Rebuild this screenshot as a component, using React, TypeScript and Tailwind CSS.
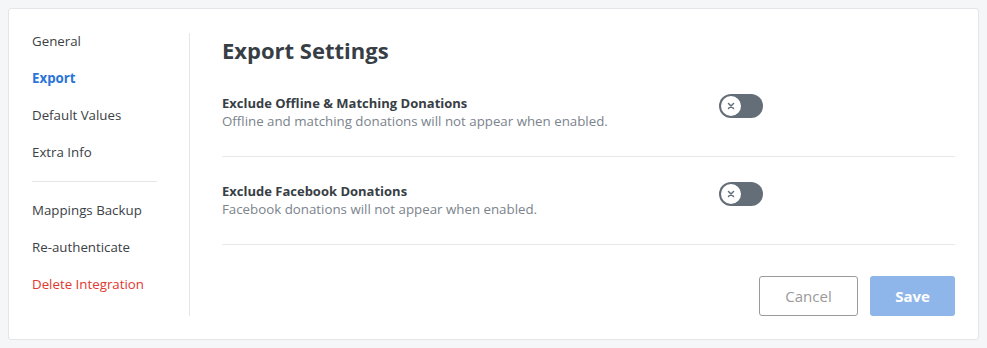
import React from "react";

const NAV_TOP = ["General", "Export", "Default Values", "Extra Info"];
const NAV_BOTTOM = ["Mappings Backup", "Re-authenticate"];

const SETTINGS = [
  {
    title: "Exclude Offline & Matching Donations",
    description: "Offline and matching donations will not appear when enabled.",
  },
  {
    title: "Exclude Facebook Donations",
    description: "Facebook donations will not appear when enabled.",
  },
];

function Toggle() {
  return (
    <button className="relative w-[44px] h-[24px] rounded-full bg-[#646e78] shrink-0">
      <span className="absolute left-[2px] top-[2px] w-[20px] h-[20px] rounded-full bg-white flex items-center justify-center">
        <svg width="8" height="8" viewBox="0 0 8 8">
          <path d="M1.5 1.5l5 5M6.5 1.5l-5 5" stroke="#646e78" strokeWidth="1.5" strokeLinecap="round" />
        </svg>
      </span>
    </button>
  );
}

export default function App() {
  return (
    <div className="w-[987px] h-[348px] bg-[#f5f6f7] p-[8px] font-['Open_Sans','Liberation_Sans',sans-serif]">
      <div className="h-[332px] bg-white border border-[#e3e5e8] rounded-[3px] flex pt-[24px] pb-[23px] px-[23px]">
        {/* Sidebar */}
        <div className="w-[158px] shrink-0 border-r border-[#e3e5e8] flex flex-col">
          <div className="w-[125px] flex flex-col gap-[21px] text-[13.3px] leading-[16px] text-[#3c4146]">
            {NAV_TOP.map((n) => (
              <span key={n} className={n === "Export" ? "font-bold text-[#2b74d8]" : ""}>
                {n}
              </span>
            ))}
            <div className="h-px bg-[#e3e5e8] -mb-[1px]" />
            {NAV_BOTTOM.map((n) => (
              <span key={n}>{n}</span>
            ))}
            <span className="text-[#e0392f]">Delete Integration</span>
          </div>
        </div>

        {/* Content */}
        <div className="flex-1 pl-[32px] flex flex-col">
          <h1 className="text-[22px] leading-[28px] mt-[3px] font-bold text-[#383e45]">Export Settings</h1>
          <div className="mt-[30px]">
            {SETTINGS.map((s, i) => (
              <div
                key={i}
                className={`flex items-start border-b border-[#e6e8eb] pb-[26px] ${i === 0 ? "" : "pt-[25px]"}`}
              >
                <div className="w-[497px]">
                  <p className="text-[13px] leading-[18px] font-bold text-[#383e45]">{s.title}</p>
                  <p className="text-[13.3px] leading-[18px] text-[#7b838c]">{s.description}</p>
                </div>
                <Toggle />
              </div>
            ))}
          </div>
          <div className="mt-auto flex justify-end gap-[12px]">
            <button className="w-[99px] h-[40px] rounded-[3px] border border-[#9b9b9b] text-[15px] text-[#9a9a9a]">
              Cancel
            </button>
            <button className="w-[85px] h-[40px] rounded-[3px] bg-[#8fb6ea] text-[15px] font-bold text-white">
              Save
            </button>
          </div>
        </div>
      </div>
    </div>
  );
}
